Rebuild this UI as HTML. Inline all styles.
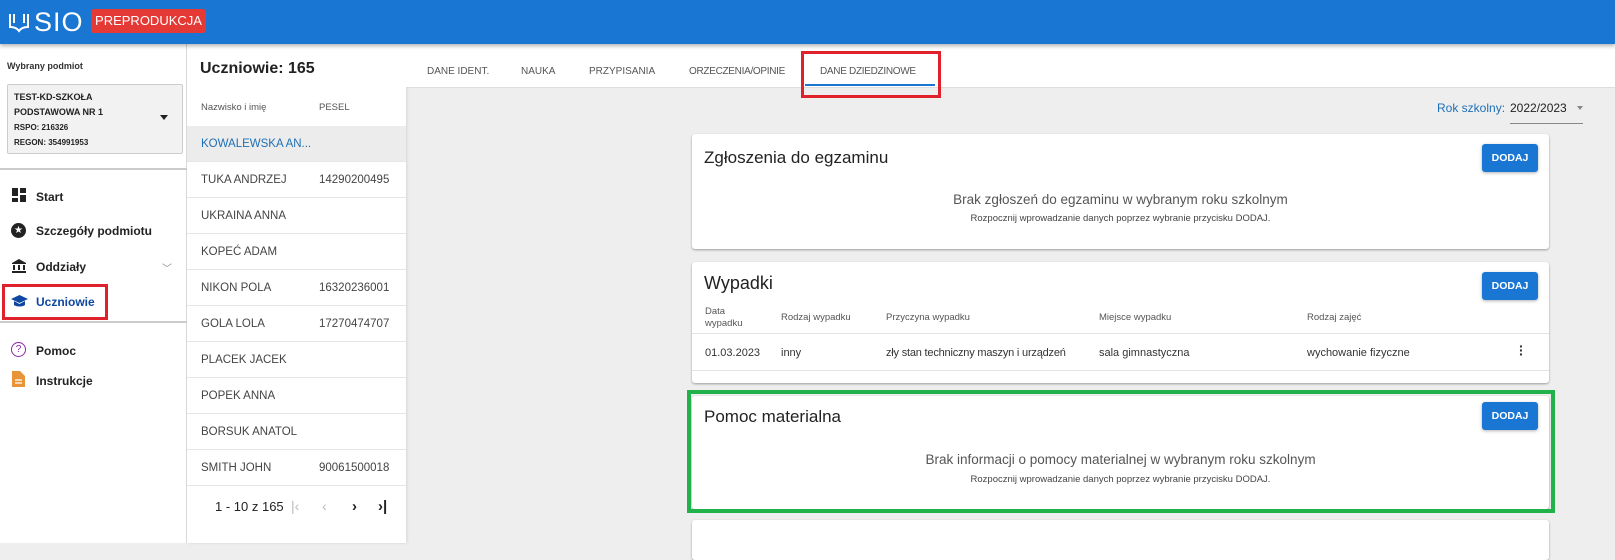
<!DOCTYPE html>
<html><head><meta charset="utf-8"><style>
*{box-sizing:border-box;margin:0;padding:0}
body{width:1615px;height:543px;overflow:hidden;font-family:"Liberation Sans",sans-serif;background:#eee;position:relative;color:#333}
.abs{position:absolute}
.hdr{left:0;top:0;width:1615px;height:44px;background:#1976d2;box-shadow:0 2px 4px rgba(0,0,0,.3);z-index:5}
.side{left:0;top:44px;width:187px;height:499px;background:#fff;border-right:1px solid #ddd}
.stud{left:187px;top:44px;width:219px;height:499px;background:#fff;box-shadow:1px 0 3px rgba(0,0,0,.1)}
.tabs{left:406px;top:44px;width:1209px;height:44px;background:#fff;border-bottom:1px solid #ddd}
.tab{position:absolute;top:22px;font-size:10px;color:#555;white-space:nowrap}
.card{position:absolute;left:692px;width:857px;background:#fff;border-radius:3px;box-shadow:0 1px 2px rgba(0,0,0,.35)}
.btn{position:absolute;right:11px;top:10px;width:56px;height:28px;background:#1976d2;color:#fff;font-size:10.5px;font-weight:bold;border-radius:3px;text-align:center;line-height:28px;box-shadow:0 1px 3px rgba(0,0,0,.3)}
.ct{position:absolute;left:12px;font-size:17px;color:#222}
.big{position:absolute;width:100%;text-align:center;font-size:13.5px;color:#555}
.small{position:absolute;width:100%;text-align:center;font-size:9.5px;color:#444}
.row{position:absolute;left:0;width:219px;height:36px;border-bottom:1px solid #e6e6e6;font-size:11.5px;color:#444}
.row span{position:absolute;top:12px}
.nav{position:absolute;left:36px;font-size:12px;font-weight:bold;color:#222}
.th{position:absolute;font-size:9.5px;color:#555}
.td{position:absolute;font-size:11px;color:#333;top:347px;white-space:nowrap}
</style></head><body>
<div class="abs hdr">
<svg class="abs" style="left:8px;top:11px" width="22" height="22" viewBox="0 0 22 22"><path d="M2 3v13c4 0 7 1 9 4c2-3 5-4 9-4V3M6 3v9M16 3v9" fill="none" stroke="#fff" stroke-width="2"/></svg>
<div class="abs" style="left:34px;top:7px;font-size:27px;color:#fff;letter-spacing:1px">SIO</div>
<div class="abs" style="left:91px;top:9px;width:115px;height:24px;background:#e53935;border-radius:3px;color:#fff;font-size:13px;line-height:24px;text-align:center;white-space:nowrap">PREPRODUKCJA</div>
</div>
<div class="abs side">
<div class="abs" style="left:7px;top:17px;font-size:9px;font-weight:bold">Wybrany podmiot</div>
<div class="abs" style="left:7px;top:40px;width:176px;height:70px;background:#f2f2f2;border:1px solid #ccc;border-radius:2px;font-size:9px;font-weight:bold;line-height:15px;padding:5px 6px;color:#222">TEST-KD-SZKOŁA<br>PODSTAWOWA NR 1<br><span style="font-size:8px;line-height:13px">RSPO: 216326<br>REGON: 354991953</span>
<div class="abs" style="left:152px;top:30px;border:4px solid transparent;border-top:5px solid #222"></div></div>
<div class="abs" style="left:0;top:124px;width:187px;height:2px;background:#ccc"></div>
<svg class="abs" style="left:12px;top:144px" width="14" height="14" viewBox="0 0 14 14"><path d="M0 0h6v8H0z M8 0h6v5H8z M0 10h6v4H0z M8 7h6v7H8z" fill="#222"/></svg>
<div class="nav" style="top:146px">Start</div>
<div class="abs" style="left:11px;top:179px;width:15px;height:15px;border-radius:50%;background:#222;color:#fff;font-size:10px;text-align:center;line-height:15px">★</div>
<div class="nav" style="top:180px">Szczegóły podmiotu</div>
<svg class="abs" style="left:11px;top:214px" width="16" height="16" viewBox="0 0 16 16"><path d="M1 5L8 1l7 4v1H1z M2 7h2v5H2z M7 7h2v5H7z M12 7h2v5h-2z M1 13h14v2H1z" fill="#222"/></svg>
<div class="nav" style="top:216px">Oddziały</div>
<div class="abs" style="left:162px;top:216px;font-size:10px;color:#888">﹀</div>
<svg class="abs" style="left:11px;top:250px" width="17" height="14" viewBox="0 0 17 14"><path d="M8.5 1L0 5l8.5 4L17 5z M3 7v4c2 2 9 2 11 0V7l-5.5 3z" fill="#0d47a1"/></svg>
<div class="nav" style="top:251px;color:#0d47a1">Uczniowie</div>
<div class="abs" style="left:2px;top:240px;width:106px;height:36px;border:3px solid #e0202a"></div>
<div class="abs" style="left:0;top:277px;width:187px;height:2px;background:#ccc"></div>
<div class="abs" style="left:11px;top:298px;width:15px;height:15px;border:1.5px solid #8e24aa;border-radius:50%;color:#8e24aa;font-size:10px;text-align:center;line-height:13px">?</div>
<div class="nav" style="top:300px">Pomoc</div>
<svg class="abs" style="left:12px;top:327px" width="13" height="16" viewBox="0 0 13 16"><path d="M0 0h8l5 5v11H0z" fill="#e8953a"/><path d="M3 9h7M3 12h7" stroke="#fff" stroke-width="1.3"/></svg>
<div class="nav" style="top:330px">Instrukcje</div>
</div>
<div class="abs stud">
<div class="abs" style="left:13px;top:16px;font-size:16px;font-weight:bold;color:#222">Uczniowie: 165</div>
<div class="abs" style="left:14px;top:58px;font-size:9.5px;color:#555">Nazwisko i imię</div>
<div class="abs" style="left:132px;top:58px;font-size:9.5px;color:#555">PESEL</div>
<div class="row" style="top:82px;background:#ececec"><span style="left:14px;color:#1f6fb5">KOWALEWSKA AN...</span></div>
<div class="row" style="top:118px"><span style="left:14px">TUKA ANDRZEJ</span><span style="left:132px">14290200495</span></div>
<div class="row" style="top:154px"><span style="left:14px">UKRAINA ANNA</span></div>
<div class="row" style="top:190px"><span style="left:14px">KOPEĆ ADAM</span></div>
<div class="row" style="top:226px"><span style="left:14px">NIKON POLA</span><span style="left:132px">16320236001</span></div>
<div class="row" style="top:262px"><span style="left:14px">GOLA LOLA</span><span style="left:132px">17270474707</span></div>
<div class="row" style="top:298px"><span style="left:14px">PLACEK JACEK</span></div>
<div class="row" style="top:334px"><span style="left:14px">POPEK ANNA</span></div>
<div class="row" style="top:370px"><span style="left:14px">BORSUK ANATOL</span></div>
<div class="row" style="top:406px"><span style="left:14px">SMITH JOHN</span><span style="left:132px">90061500018</span></div>
<div class="abs" style="left:28px;top:455px;font-size:13px;color:#222">1 - 10 z 165</div>
<div class="abs" style="left:104px;top:454px;font-size:14px;color:#bbb">|‹</div>
<div class="abs" style="left:135px;top:454px;font-size:14px;color:#bbb">‹</div>
<div class="abs" style="left:165px;top:454px;font-size:15px;color:#222;font-weight:bold">›</div>
<div class="abs" style="left:191px;top:454px;font-size:15px;color:#222;font-weight:bold">›|</div>
</div>
<div class="abs tabs">
<div class="tab" style="left:21px">DANE IDENT.</div>
<div class="tab" style="left:115px">NAUKA</div>
<div class="tab" style="left:183px">PRZYPISANIA</div>
<div class="tab" style="left:283px;letter-spacing:-0.3px">ORZECZENIA/OPINIE</div>
<div class="tab" style="left:414px;letter-spacing:-0.3px">DANE DZIEDZINOWE</div>
<div class="abs" style="left:399px;top:40px;width:130px;height:2px;background:#1976d2"></div>
<div class="abs" style="left:395px;top:7px;height:47px;border:3px solid #e0202a;width:140px"></div>
</div>
<div class="abs" style="left:1437px;top:101px;font-size:12px;color:#1f6fb5">Rok szkolny:</div>
<div class="abs" style="left:1510px;top:101px;font-size:12px;color:#222">2022/2023</div>
<div class="abs" style="left:1577px;top:106px;border:3px solid transparent;border-top:4px solid #888"></div>
<div class="abs" style="left:1510px;top:123px;width:73px;height:1px;background:#888"></div>

<div class="card" style="top:134px;height:115px">
<div class="ct" style="top:14px">Zgłoszenia do egzaminu</div><div class="btn">DODAJ</div>
<div class="big" style="top:58px">Brak zgłoszeń do egzaminu w wybranym roku szkolnym</div>
<div class="small" style="top:79px">Rozpocznij wprowadzanie danych poprzez wybranie przycisku DODAJ.</div>
</div>
<div class="card" style="top:262px;height:121px">
<div class="ct" style="top:11px;font-size:18px">Wypadki</div><div class="btn">DODAJ</div>
<div class="abs" style="left:0;top:71px;width:857px;height:1px;background:#e3e3e3"></div>
<div class="abs" style="left:0;top:108px;width:857px;height:1px;background:#e3e3e3"></div>
</div>
<div class="th" style="left:705px;top:306px;line-height:12px">Data<br>wypadku</div>
<div class="th" style="left:781px;top:312px">Rodzaj wypadku</div>
<div class="th" style="left:886px;top:312px">Przyczyna wypadku</div>
<div class="th" style="left:1099px;top:312px">Miejsce wypadku</div>
<div class="th" style="left:1307px;top:312px">Rodzaj zajęć</div>
<div class="td" style="left:705px">01.03.2023</div><div class="td" style="left:781px">inny</div>
<div class="td" style="left:886px;letter-spacing:-0.2px">zły stan techniczny maszyn i urządzeń</div>
<div class="td" style="left:1099px">sala gimnastyczna</div><div class="td" style="left:1307px">wychowanie fizyczne</div>
<div class="td" style="left:1519px;top:344px;font-weight:bold;font-size:14px;line-height:4px">·<br>·<br>·</div>
<div class="card" style="top:396px;height:113px">
<div class="ct" style="top:11px">Pomoc materialna</div><div class="btn" style="top:6px">DODAJ</div>
<div class="big" style="top:56px">Brak informacji o pomocy materialnej w wybranym roku szkolnym</div>
<div class="small" style="top:78px">Rozpocznij wprowadzanie danych poprzez wybranie przycisku DODAJ.</div>
</div>
<div class="abs" style="left:687px;top:390px;width:868px;height:123px;border:4px solid #22b24c"></div>
<div class="card" style="top:520px;height:40px"></div>
</body></html>
